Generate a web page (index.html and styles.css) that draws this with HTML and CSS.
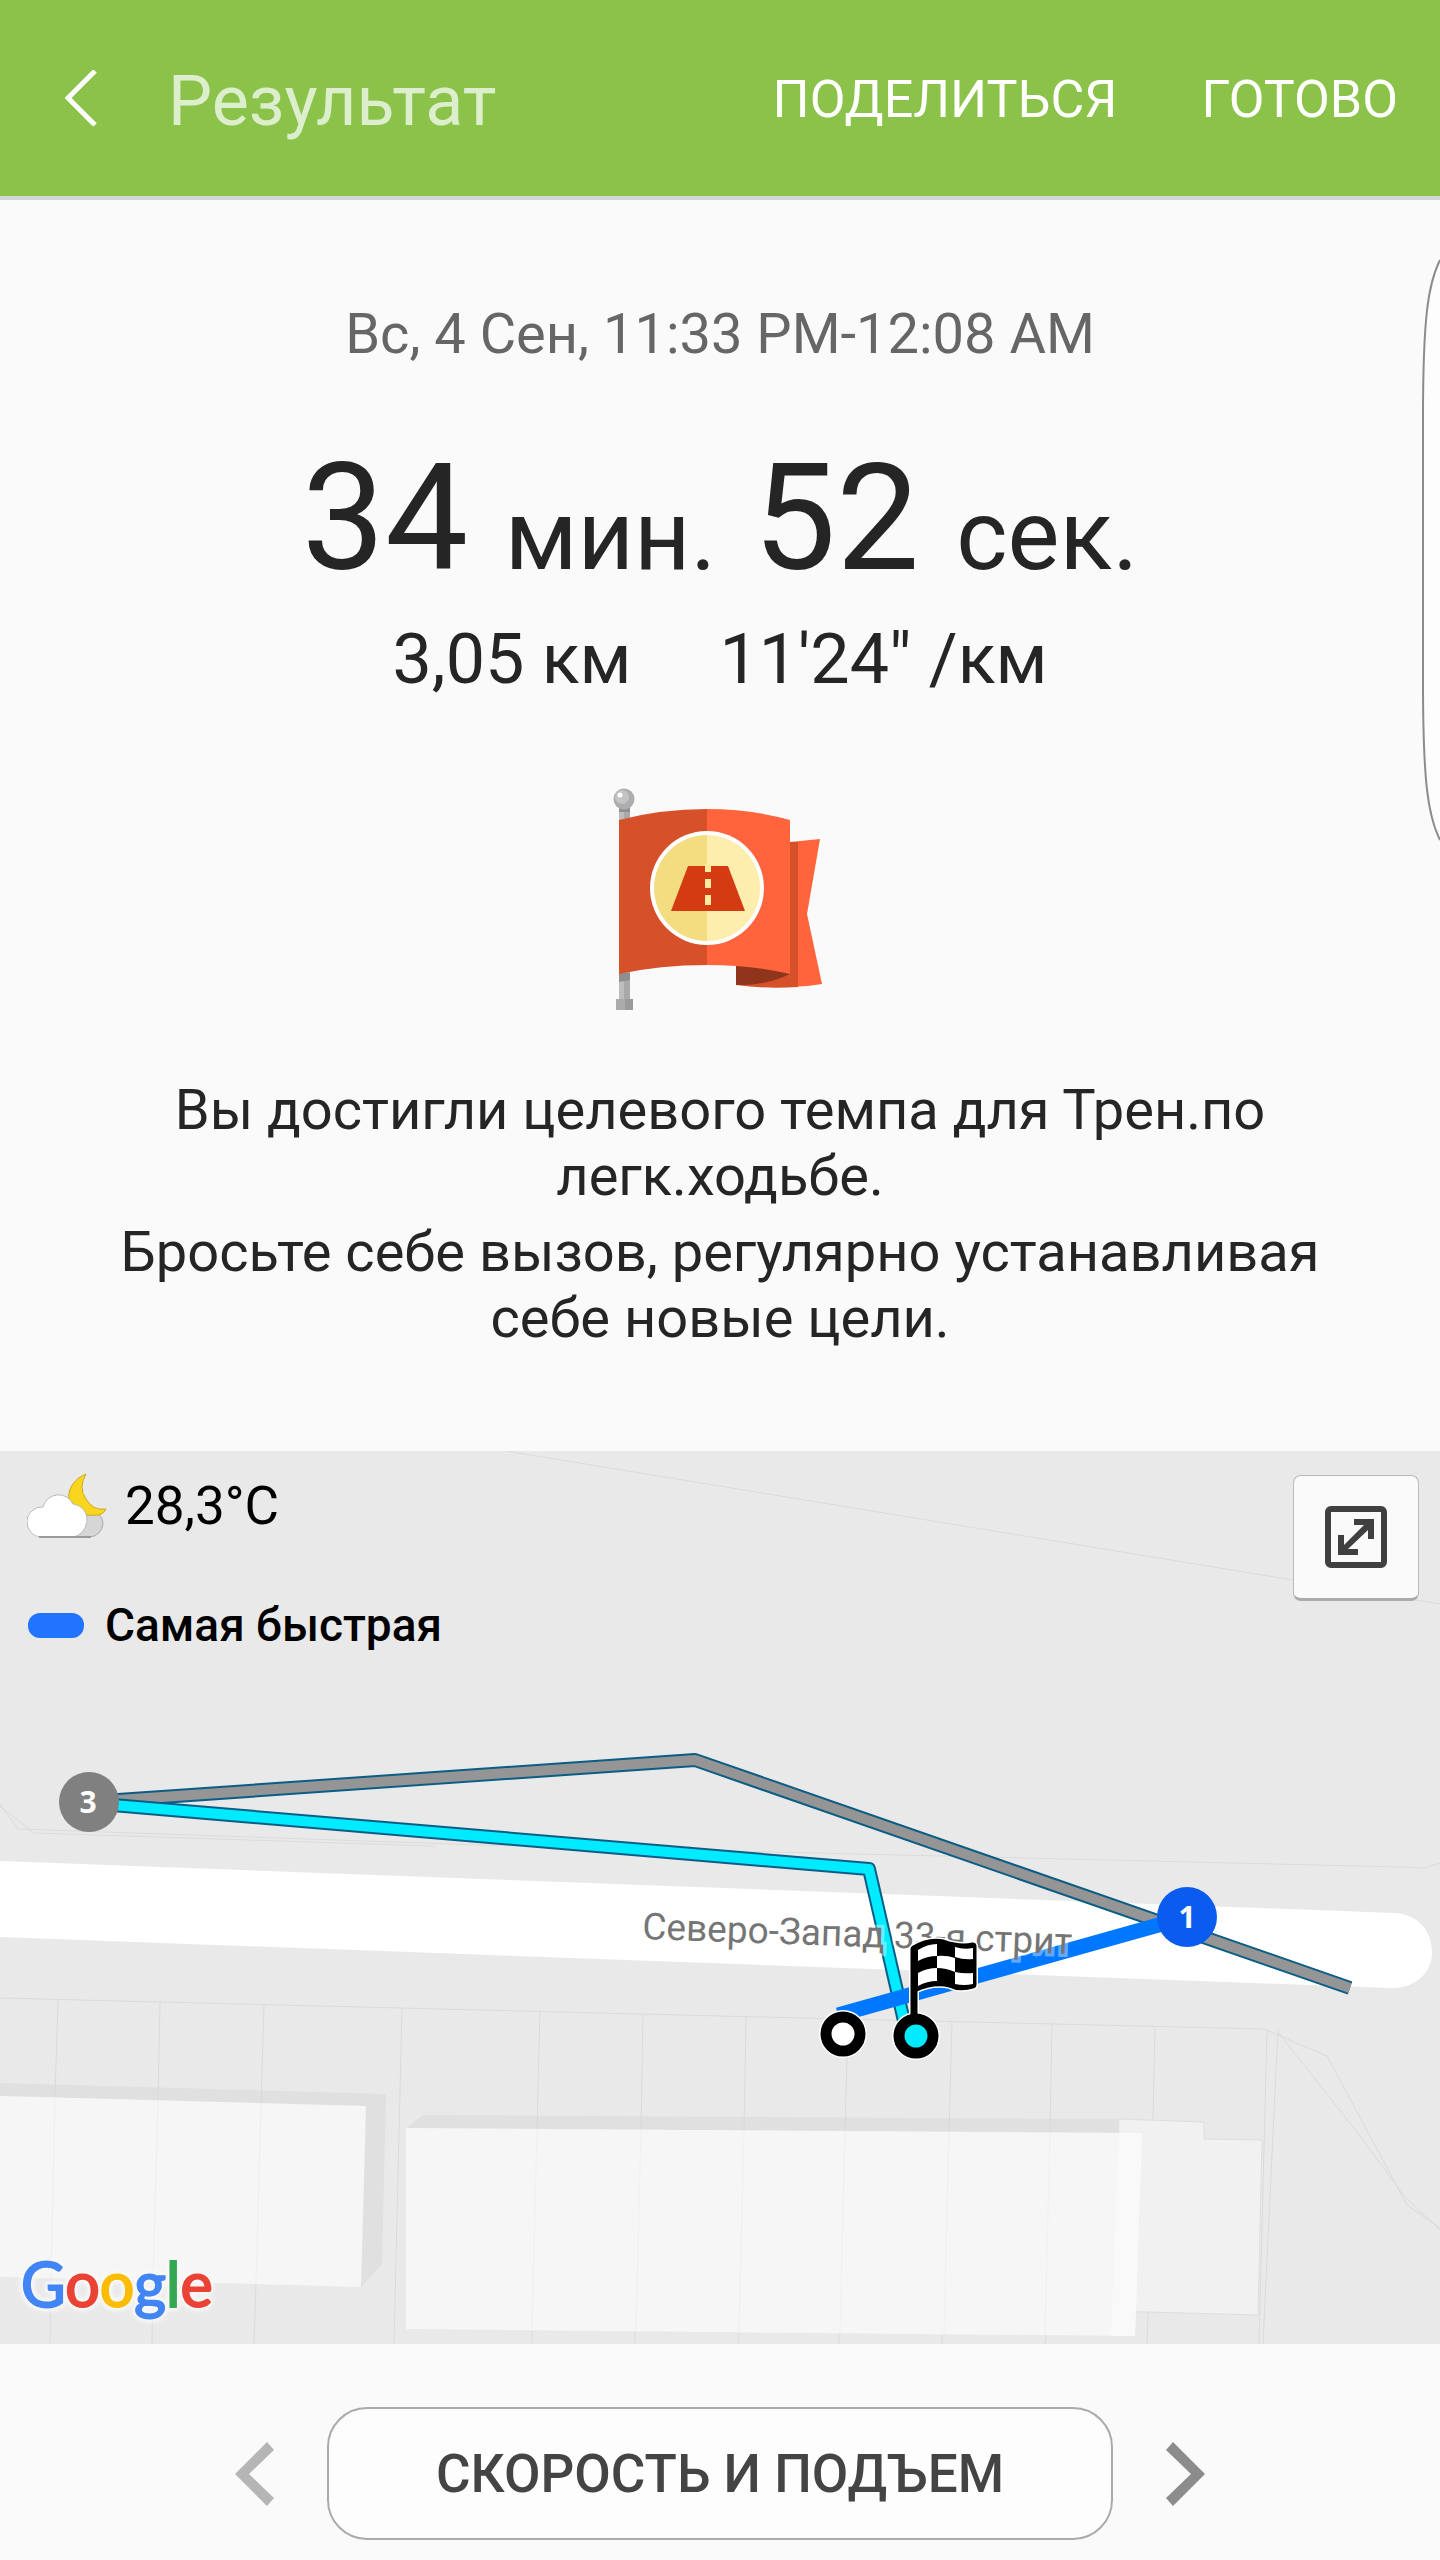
FILE: index.html
```html
<!DOCTYPE html>
<html lang="ru">
<head>
<meta charset="utf-8">
<meta name="viewport" content="width=device-width, initial-scale=1">
<title>Результат</title>
<link rel="stylesheet" href="styles.css">
</head>
<body>
<header class="bar">
  <button class="back" type="button" aria-label="Назад">
    <svg width="32" height="56" viewBox="0 0 32 56"><path d="M30 1 3 28l27 27" fill="none" stroke="#fff" stroke-width="5"/></svg>
  </button>
  <h1 class="title">Результат</h1>
  <button class="action" type="button">ПОДЕЛИТЬСЯ</button>
  <button class="action" type="button">ГОТОВО</button>
</header>

<main>
  <section class="summary">
    <p class="date">Вс, 4 Сен, 11:33 PM-12:08 AM</p>
    <p class="duration">34 <small>мин.</small> 52 <small>сек.</small></p>
    <p class="stats"><span>3,05 км</span><span>11'24" /км</span></p>
    <svg class="flag" width="214" height="226" viewBox="0 0 214 226" aria-hidden="true">
      <path d="M6 22h11v190H6z" fill="#bdbdbd"/><path d="M11 22h6v190h-6z" fill="#a9a9a9"/>
      <path d="M6 18h11v7H6z" fill="#8f8f8f"/><path d="M6 186h11v7L6 195z" fill="#8f8f8f"/>
      <path d="M3 212h17v11H3z" fill="#ababab"/><path d="M12 212h8v11h-8z" fill="#9a9a9a"/>
      <circle cx="11" cy="12" r="10.500" fill="#adadad"/><circle cx="9" cy="10" r="7" fill="#c4c4c4"/><circle cx="7" cy="8" r="2.500" fill="#fff"/>
      <path d="M177 55 207 52 194 127 209 197q-16 3-32 3z" fill="#ff643c"/>
      <path d="M150 55h35v145q-34 2-62-2v-18z" fill="#d65129"/>
      <path d="M123 179h54v8q-25 12-54 11z" fill="#8f351c"/>
      <path d="M6 33Q48 22 94 22v156Q47 178 6 187z" fill="#d65129"/>
      <path d="M94 22q44 0 83 11v154q-39-9-83-9z" fill="#ff643c"/>
      <circle cx="94" cy="101" r="57" fill="#fff"/>
      <path d="M94 48a53 53 0 0 0 0 106z" fill="#f4dc80"/><path d="M94 48a53 53 0 0 1 0 106z" fill="#fdeeae"/>
      <path d="M75 79h40l17 45H58z" fill="#d53b12"/>
      <path d="M92 77h6v8h-6zm0 15h6v9h-6zm0 16h6v10h-6z" fill="#fbe9a0"/>
    </svg>
    <p class="message">Вы достигли целевого темпа для Трен.по легк.ходьбе.</p>
    <p class="message">Бросьте себе вызов, регулярно устанавливая себе новые цели.</p>
  </section>

  <section class="map" aria-label="Карта маршрута">
    <svg class="canvas" viewBox="0 1451 1440 893">
      <path d="M0 1451h1440v893H0z" fill="#e9e9e9"/>
      <g fill="none" stroke="#dddbd8" stroke-width="1">
        <path d="M506 1451 1293 1580 1440 1604M0 1804l18 25 462 16 920 22 25 1 15-5M0 1806l34 27 400 13"/>
      </g>
      <path d="M0 1861 1394 1913C1417 1914 1432 1930 1432 1952C1432 1974 1414 1989 1390 1988L0 1937z" fill="#fff"/>
      <path d="M0 2083 386 2094 382 2264 361 2287V2106L0 2096zM406 2128l17-13 696 4 23 14z" fill="#e0e0e0"/>
      <path d="M1119 2119l85 3v17l58 1-4 175-147-4z" fill="#f1f1f1" stroke="#dedede"/>
      <path d="M0 2096 366 2106 361 2287 0 2277zM406 2128l736 5-7 203-729-7z" fill="#f6f6f6"/>
      <path d="M1119 2133h23l-7 203h-24z" fill="#f9f9f9"/>
      <g fill="none" stroke="#d8d5d1" stroke-width="1" opacity=".75">
        <path d="M0 1998 720 2016 1264 2029 1327 2056 1407 2205 1440 2228M1278 2032 1360 2136 1404 2196 1440 2230"/>
        <path d="M58 2000l-3 96M160 2003l-2 97M264 2005l-3 99M402 2008l-8 336M540 2012l-3 117M643 2014l-2 115M746 2017l-2 113M848 2020l-3 110M952 2022l-3 109M1052 2025l-2 107M1155 2028l-2 92M1267 2030l-8 314M1278 2030l-15 314M51 2278l-1 66M153 2281l-1 63M256 2284l-2 60M532 2331v13M635 2332v12M739 2333l-1 11M839 2334v10M942 2335v9M1046 2335l-1 9M1148 2313l-1 31"/>
      </g>
      <g fill="none" stroke="#f0efed" stroke-width="1">
        <path d="M55 2097l-4 180M158 2100l-5 180M261 2104l-5 180M537 2129l-5 200M641 2130l-5 200M744 2130l-5 202M845 2131l-5 202M949 2131l-5 202M1050 2132l-5 202"/>
      </g>
      <g fill="none" stroke-linejoin="round">
        <path d="M89 1802 695 1760 1350 1988" stroke="#0b5d85" stroke-width="14"/>
        <path d="M89 1802 695 1760 1350 1988" stroke="#959595" stroke-width="10"/>
        <path d="M89 1803 869 1869 907 2034" stroke="#0b5d85" stroke-width="14"/>
        <path d="M89 1803 869 1869 907 2034" stroke="#00ebff" stroke-width="10"/>
        <path d="M838 2015 1187 1917" stroke="#0077ff" stroke-width="15"/>
      </g>
      <text class="street" x="642" y="1939" transform="rotate(2 642 1939)">Северо-Запад 33-я стрит</text>
      <circle cx="89" cy="1802" r="30" fill="#808080"/>
      <circle cx="1187" cy="1917" r="30" fill="#0a5cee"/>
      <text class="pin" x="88" y="1813">3</text>
      <text class="pin" x="1187" y="1928">1</text>
      <circle cx="843" cy="2034" r="17" fill="#fff" stroke="#fff" stroke-width="14"/>
      <circle cx="843" cy="2034" r="17" fill="#fff" stroke="#000" stroke-width="11"/>
      <path d="M914 2016V1949Q929 1940 943 1943Q960 1949 973 1946V1985Q960 1989 950 1984Q933 1980 914 1989" fill="#000" stroke="#fff" stroke-width="10" stroke-linejoin="round"/>
      <circle cx="916" cy="2036" r="17" fill="#00ebff" stroke="#fff" stroke-width="14"/>
      <circle cx="916" cy="2036" r="17" fill="#00ebff" stroke="#000" stroke-width="11"/>
      <path d="M914 2018V1949Q929 1940 943 1943Q960 1949 973 1946V1985Q960 1989 950 1984Q933 1980 914 1989" fill="#000" stroke="#000" stroke-width="7" stroke-linejoin="round"/>
      <path d="M918 1950q9-6 19-6v12q-10 0-19 5zM955 1947q9 3 18 1v11q-9 1-18-2zM937 1956q9-1 18 2v14q-9-4-18-4zM918 1973q9-5 19-5v13q-10 0-19 5zM955 1972q9 2 18 1v11q-9 2-18 0z" fill="#fff"/>
    </svg>
    <div class="overlay">
      <div class="info">
        <p class="weather">
          <svg width="80" height="68" viewBox="0 0 80 68" aria-hidden="true">
            <path d="M35 65h28a14 14 0 0 0 13-14 16 16 0 0 0-13-14z" fill="#d6d6d6" stroke="#aaa"/>
            <path d="M59 2C42 9 38 25 45 36q8 9 27 7 6-2 7-6-13 2-20-10-8-11 0-25z" fill="#f8d61d" stroke="#c9a928"/>
            <path d="M14 65a14 14 0 0 1 2-30A16 16 0 0 1 46 32c10 2 14 8 14 17q-2 13-13 16z" fill="#fff" stroke="#bbb"/>
            <path d="M12 65h52" stroke="#999" stroke-width="2"/>
          </svg>
          28,3°C
        </p>
        <p class="legend"><i class="swatch"></i>Самая быстрая</p>
      </div>
      <button class="expand" type="button" aria-label="Развернуть карту">
        <svg width="62" height="62" viewBox="0 0 62 62"><rect x="3" y="3" width="56" height="56" rx="3" fill="none" stroke="#404040" stroke-width="6"/><path d="M29 13h20v20h-6v-9L23 43h10v6H13V29h6v10l20-20H29z" fill="#404040"/></svg>
      </button>
      <p class="google" aria-label="Google"><span class="blue">G</span><span class="red">o</span><span class="yellow">o</span><span class="blue">g</span><span class="green">l</span><span class="red">e</span></p>
    </div>
  </section>

  <nav class="pager">
    <button class="arrow" type="button" aria-label="Предыдущий">
      <svg width="40" height="64" viewBox="0 0 40 64"><path d="M32 0 0 32l32 32 7-8-25-24L39 8z" fill="#b5b5b5"/></svg>
    </button>
    <button class="chart" type="button">СКОРОСТЬ И ПОДЪЕМ</button>
    <button class="arrow" type="button" aria-label="Следующий">
      <svg width="40" height="64" viewBox="0 0 40 64"><path d="M8 0l32 32L8 64l-7-8 25-24L1 8z" fill="#8c8c8c"/></svg>
    </button>
  </nav>
</main>
<svg class="edge" width="18" height="584" viewBox="0 0 18 584" aria-hidden="true"><path d="M18 2C6 26 1 60 1 160V424C1 524 6 558 18 582" fill="#fdfdfd" stroke="#8c8c8c" stroke-width="2"/></svg>
</body>
</html>
```
FILE: styles.css
```css
* { box-sizing: border-box; }

body {
  position: relative;
  margin: 0;
  background: #fafafa;
  color: #252525;
  font-family: Roboto, "Liberation Sans", sans-serif;
}

p, h1 { margin: 0; font-weight: 400; }

button {
  padding: 0;
  border: 0;
  background: none;
  color: inherit;
  font: inherit;
  cursor: pointer;
}

svg { display: block; }

.bar {
  display: flex;
  align-items: center;
  height: 200px;
  padding: 0 42px 0 65px;
  border-bottom: 4px solid #d2d6d4;
  background: #8bc34a;
  color: #fff;
}

.title {
  flex: 1;
  margin-left: 71px;
  padding-top: 6px;
  color: #dceecb;
  font-size: 70px;
  line-height: 84px;
}

.action { margin-left: 84px; padding-top: 4px; font-size: 52px; line-height: 64px; }

.summary {
  display: flex;
  flex-direction: column;
  align-items: center;
  padding: 100px 100px;
  text-align: center;
}

.date { color: #666; font-size: 56px; line-height: 68px; }

.duration {
  margin-top: 71px;
  font-size: 148px;
  line-height: 160px;
}

.duration small { font-size: 98px; line-height: 1; }

.stats {
  display: flex;
  gap: 88px;
  margin-top: 18px;
  font-size: 70px;
  line-height: 84px;
}

.flag { margin: 86px 0 64px; }

.message { font-size: 56px; line-height: 66px; }
.message + .message { margin-top: 10px; }

.map { position: relative; overflow: hidden; background: #e9e9e9; }

.canvas { width: 100%; height: auto; }

.street {
  fill: #757575;
  stroke: #fff;
  stroke-opacity: .4;
  stroke-width: 6px;
  paint-order: stroke;
  font-size: 37px;
}

.pin {
  fill: #fff;
  font-family: "Open Sans", "Noto Sans", sans-serif;
  font-size: 30px;
  font-weight: 700;
  text-anchor: middle;
}

.overlay {
  position: absolute;
  inset: 0;
  display: grid;
  grid-template-columns: 1fr auto;
  grid-template-rows: auto 1fr;
  padding: 20px 21px 24px;
  color: #000;
}

.weather {
  display: flex;
  align-items: center;
  gap: 18px;
  margin-left: 6px;
  font-size: 53px;
  line-height: 70px;
}

.legend {
  display: flex;
  align-items: center;
  gap: 21px;
  margin: 56px 0 0 7px;
  font-size: 46px;
  font-weight: 500;
  line-height: 56px;
}

.swatch { width: 56px; height: 25px; border-radius: 12px; background: #2074ff; }

.expand {
  display: grid;
  place-items: center;
  width: 126px;
  height: 126px;
  margin-top: 4px;
  border: 1px solid #bbb;
  border-bottom: 3px solid #aaa;
  border-radius: 8px;
  background: #fafafa;
}

.google {
  align-self: end;
  justify-self: start;
  font-family: Lato, "Open Sans", sans-serif;
  font-size: 61px;
  line-height: 72px;
  -webkit-text-stroke: 2px currentColor;
  filter: drop-shadow(0 0 2px #f8f8f8) drop-shadow(0 0 2px #f8f8f8) drop-shadow(0 0 2px #f8f8f8);
}

.blue { color: #4285f4; }
.red { color: #ea4335; }
.yellow { color: #fbbc05; }
.green { color: #34a853; }

.pager {
  display: flex;
  align-items: center;
  justify-content: center;
  gap: 52px;
  padding: 63px 0 20px;
}

.chart {
  height: 133px;
  padding: 0 107px;
  border: 2px solid #aaa;
  border-radius: 40px;
  background: #fdfdfd;
  color: #444;
  font-size: 53px;
  font-weight: 500;
}

.edge { position: absolute; top: 258px; right: 0; }
```
